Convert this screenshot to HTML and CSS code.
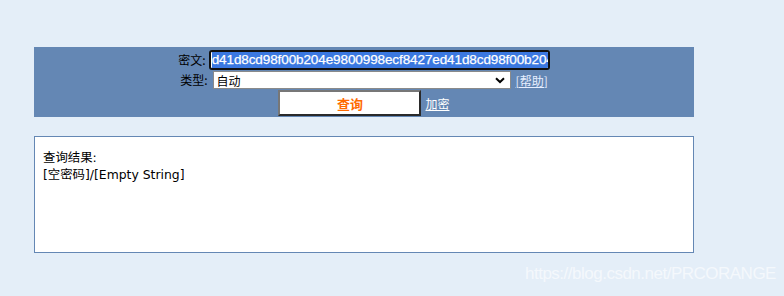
FILE: index.html
```html
<!DOCTYPE html>
<html>
<head>
<meta charset="utf-8">
<link rel="stylesheet" href="styles.css">
</head>
<body>
<div class="page">
  <form class="panel">
    <div class="row">
      <span class="label">密文:</span>
      <div class="cipher"><span class="sel">d41d8cd98f00b204e9800998ecf8427ed41d8cd98f00b204e9800998ecf8427e</span></div>
    </div>
    <div class="row row-type">
      <span class="label">类型:</span>
      <div class="select"><span>自动</span>
        <svg class="chev" width="10" height="7" viewBox="0 0 10 7"><path d="M1 1.2 L5 5 L9 1.2" fill="none" stroke="#000" stroke-width="2"/></svg>
      </div>
      <a class="help" href="#">[帮助]</a>
    </div>
    <div class="row row-btn">
      <div class="btn">查询</div>
      <a class="enc" href="#">加密</a>
    </div>
  </form>
  <div class="result">
    <div class="line">查询结果:</div>
    <div class="line">[空密码]/[Empty String]</div>
  </div>
</div>
<div class="wm">https://blog.csdn.net/PRCORANGE</div>
</body>
</html>
```
FILE: styles.css
```css
html, body { margin: 0; padding: 0; }
body {
  background: #e4eef8;
  width: 784px;
  height: 296px;
  overflow: hidden;
  position: relative;
  font-family: "Noto Sans CJK SC", "Liberation Sans", sans-serif;
  font-size: 12px;
  color: #000;
}
.page {
  padding-top: 47px;
  margin-left: 34px;
  width: 660px;
}
.panel {
  margin: 0;
  background: #6487b4;
  height: 70px;
  padding-top: 3px;
  box-sizing: border-box;
  display: flex;
  flex-direction: column;
  align-items: center;
}
.row {
  display: flex;
  align-items: center;
  height: 20px;
}
.label {
  color: #000;
  font-size: 12px;
  line-height: 14px;
  margin-right: 3px;
}
.cipher {
  width: 341px;
  height: 20px;
  box-sizing: border-box;
  border: 2px solid #101010;
  border-radius: 3px;
  background: #fff;
  overflow: hidden;
  white-space: nowrap;
  padding: 0 1px;
  display: flex;
  align-items: center;
}
.sel {
  background: #3b78e0;
  color: #fff;
  font-family: "Liberation Sans", Arial, sans-serif;
  font-size: 13.5px;
  line-height: 16px;
  letter-spacing: -0.1px;
  -webkit-text-stroke: 0.25px #fff;
}
.row-type { height: 18px; margin-top: 1px; }
.row-type .label { margin-right: 5px; }
.select {
  width: 298px;
  height: 18px;
  box-sizing: border-box;
  background: #fff;
  border: 1px solid #8a8a8a;
  display: flex;
  align-items: center;
  justify-content: space-between;
  padding: 0 5px 0 3px;
  font-size: 12px;
}
.help {
  color: #e6eeff;
  margin-left: 5px;
  font-size: 12px;
  text-decoration: underline;
}
.row-btn { height: 26px; margin-top: 1px; }
.btn {
  width: 143px;
  height: 26px;
  box-sizing: border-box;
  background: #fff;
  border-style: solid;
  border-width: 2px;
  border-color: #777 #2a2a2a #2a2a2a #777;
  color: #ff6a00;
  font-weight: bold;
  font-size: 13px;
  display: flex;
  align-items: center;
  justify-content: center;
}
.enc {
  color: #fff;
  margin-left: 4px;
  font-size: 12px;
  text-decoration: underline;
}
.result {
  margin-top: 19px;
  height: 117px;
  box-sizing: border-box;
  background: #fff;
  border: 1px solid #6487b4;
  padding: 12px 8px 0;
  font-family: "DejaVu Sans", "Noto Sans CJK SC", sans-serif;
  font-size: 12.4px;
}
.line {
  line-height: 17px;
  height: 17px;
  white-space: nowrap;
}
.wm {
  position: absolute;
  left: 525px;
  top: 264px;
  color: #f4f8fc;
  font-family: "Liberation Sans", Arial, sans-serif;
  font-size: 17px;
  letter-spacing: -0.5px;
  white-space: nowrap;
}
```
